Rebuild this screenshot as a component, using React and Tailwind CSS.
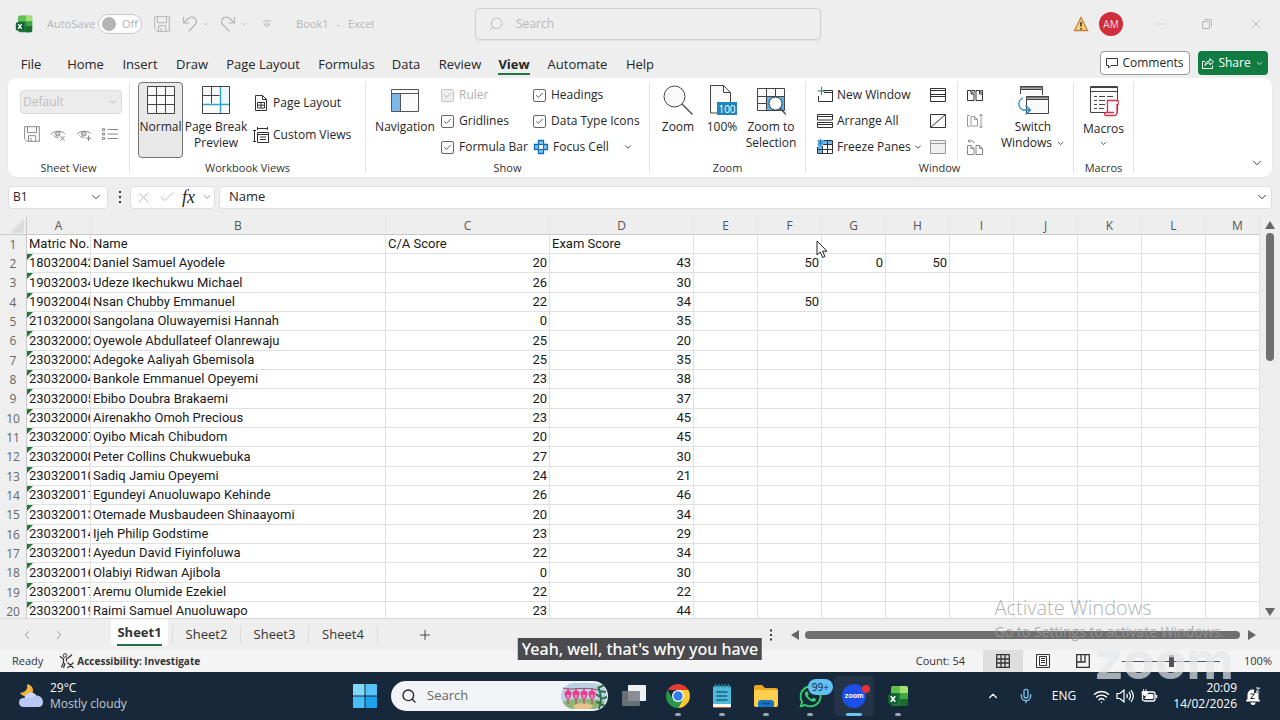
import { ChevronDown, ChevronLeft, ChevronRight, ChevronUp, Check, Mic, Minus, Plus, Search, Wifi, X } from 'lucide-react';
import { FaWhatsapp } from 'react-icons/fa';

const tabs = [
  { name: 'File', width: 'w-[54px]' },
  { name: 'Home', width: 'w-[55px]' },
  { name: 'Insert', width: 'w-[54px]' },
  { name: 'Draw', width: 'w-[50px]' },
  { name: 'Page Layout', width: 'w-[92px]' },
  { name: 'Formulas', width: 'w-[75px]' },
  { name: 'Data', width: 'w-[44px]' },
  { name: 'Review', width: 'w-[64px]' },
  { name: 'View', width: 'w-[44px]', active: true },
  { name: 'Automate', width: 'w-[83px]' },
  { name: 'Help', width: 'w-[42px]' },
];

const columns = [
  { name: 'A', width: 'w-16' },
  { name: 'B', width: 'w-[295px]' },
  { name: 'C', width: 'w-[164px]' },
  { name: 'D', width: 'w-36' },
  ...['E', 'F', 'G', 'H', 'I', 'J', 'K', 'L', 'M'].map((name) => ({ name, width: 'w-16' })),
];

const rows = [
  ['Matric No.', 'Name', 'C/A Score', 'Exam Score'],
  ['180320042', 'Daniel Samuel Ayodele', 20, 43, '', 50, 0, 50],
  ['190320034', 'Udeze Ikechukwu Michael', 26, 30],
  ['190320040', 'Nsan Chubby Emmanuel', 22, 34, '', 50],
  ['210320008', 'Sangolana Oluwayemisi Hannah', 0, 35],
  ['230320002', 'Oyewole Abdullateef Olanrewaju', 25, 20],
  ['230320003', 'Adegoke Aaliyah Gbemisola', 25, 35],
  ['230320004', 'Bankole Emmanuel Opeyemi', 23, 38],
  ['230320005', 'Ebibo Doubra Brakaemi', 20, 37],
  ['230320006', 'Airenakho Omoh Precious', 23, 45],
  ['230320007', 'Oyibo Micah Chibudom', 20, 45],
  ['230320008', 'Peter Collins Chukwuebuka', 27, 30],
  ['230320010', 'Sadiq Jamiu Opeyemi', 24, 21],
  ['230320011', 'Egundeyi Anuoluwapo Kehinde', 26, 46],
  ['230320013', 'Otemade Musbaudeen Shinaayomi', 20, 34],
  ['230320014', 'Ijeh Philip Godstime', 23, 29],
  ['230320015', 'Ayedun David Fiyinfoluwa', 22, 34],
  ['230320016', 'Olabiyi Ridwan Ajibola', 0, 30],
  ['230320017', 'Aremu Olumide Ezekiel', 22, 22],
  ['230320019', 'Raimi Samuel Anuoluwapo', 23, 44],
];

/* ---------- icons ---------- */

const Icon = ({ w = 16, h = 16, className = '', children }) => (
  <svg width={w} height={h} viewBox={`0 0 ${w} ${h}`} fill="none" stroke="currentColor" className={`shrink-0 ${className}`} aria-hidden="true">
    {children}
  </svg>
);

const ExcelLogo = ({ size }) => (
  <svg width={size} height={size} viewBox="0 0 22 22" className="shrink-0" aria-hidden="true">
    <rect x="4" y="1" width="17" height="20" rx="2" fill="#1a7a3c" />
    <path d="M4 3a2 2 0 0 1 2-2h7v7H4z" fill="#5fc04c" />
    <path d="M13 1h6a2 2 0 0 1 2 2v5h-8z" fill="#a5e070" />
    <path d="M13 8h8v6h-8z" fill="#3fa845" />
    <path d="M13 14h8v5a2 2 0 0 1-2 2h-6z" fill="#1d6b30" />
    <rect x="1" y="9" width="10" height="10" rx="2" fill="#0f6030" />
    <path d="M3.8 11.2l4.4 5.6M8.2 11.2l-4.4 5.6" stroke="#fff" strokeWidth="1.7" />
  </svg>
);

const SaveIcon = ({ className }) => (
  <Icon className={className}>
    <path d="M.7.7h14.6v14.6H3L.7 13zM3.5.7v6h9v-6M4.5 15.3v-5.6h7.2v5.6M7 12v3" />
  </Icon>
);

const UndoIcon = ({ className }) => (
  <Icon className={className}>
    <path d="M1.5 1v6h6M1.8 6.8L6 2.8c2.6-2.4 6-2 7.6.3 1.5 2.2.8 4.3-.8 5.9L6.5 15.5" strokeWidth="1.2" />
  </Icon>
);

const EyeIcon = ({ mark }) => (
  <Icon className="text-[#8a8a8a]">
    <path d="M1 8.5C3 4.5 12.5 4 14.8 8M3.5 9.5c1 1.3 2.5 2 4.5 2" />
    <circle cx="7.8" cy="7.8" r="2.3" fill="#ccc" />
    {mark === 'x' ? <path d="M10.5 10l4 4.5M14.5 10l-4 4.5" /> : <path d="M12.5 9.5v5.5M9.8 12.2h5.4" />}
  </Icon>
);

const ListIcon = () => (
  <Icon className="text-[#8a8a8a]">
    <path d="M.5 2.5h2v2h-2zM.5 7h2v2h-2zM.5 11.500h2v2h-2zM5.500 3.500H16M5.500 8H16M5.500 12.500H16" />
  </Icon>
);

const NormalIcon = () => (
  <Icon w={30} h={30} className="text-[#444]">
    <path d="M1.5 1.5h27v27h-27z" fill="#fafafa" />
    <path d="M10.5 1.5v27M19.5 1.5v27M1.5 10.5h27M1.5 19.5h27" />
  </Icon>
);

const PageBreakIcon = () => (
  <Icon w={30} h={30} className="text-[#444]">
    <path d="M1.5 1.5h27v27h-27z" fill="#fafafa" />
    <path d="M20 2h8v17h-8z" fill="#eaf7fc" stroke="none" />
    <path d="M10.5 1.5v17M1.5 10.5h17" />
    <path d="M19.5 2v26M2 19.5h26" stroke="#2fa8c8" strokeWidth="1.5" />
  </Icon>
);

const PageLayoutIcon = () => (
  <Icon className="text-[#333]">
    <path d="M2.5.5h7l4 4v11h-11zM9.5.5v4h4" />
    <path d="M4.5 7.5h7v5.5h-7zM8 7.5V13M4.5 10.2h7" />
  </Icon>
);

const CustomViewsIcon = () => (
  <Icon className="text-[#333]">
    <path d="M1.5 3v12M0 3.5h3M0 14.5h3M4 1.5h11M4.5 0v3M14.5 0v3" />
    <path d="M4.5 5.5h11v10h-11zM4.5 7.5h11M7 10h6M7 12.5h6" />
  </Icon>
);

const NavigationIcon = () => (
  <Icon w={30} h={30} className="text-[#555]">
    <path d="M1.5 4.5h27v22h-27z" fill="#fafafa" />
    <path d="M2 9h8v17H2z" fill="#7db9e8" stroke="none" />
    <path d="M1.5 8.5h27M10.5 8.5v18" />
  </Icon>
);

const FocusCellIcon = () => (
  <Icon className="text-[#0f6cbd]">
    <path d="M5.5 1.5h5v4h4v5h-4v4h-5v-4h-4v-5h4z" fill="#82c4ee" strokeWidth="1.3" />
    <path d="M5.5 5.5h5v5h-5z" fill="#fff" />
  </Icon>
);

const MagnifierIcon = () => (
  <Icon w={30} h={30} className="text-[#444]">
    <circle cx="11.5" cy="11.5" r="10.5" fill="#fafafa" />
    <path d="M19 19l10.5 10.5" strokeWidth="1.3" />
  </Icon>
);

const HundredIcon = () => (
  <svg width="30" height="30" viewBox="0 0 30 30" fill="none" stroke="#444" className="shrink-0" aria-hidden="true">
    <path d="M3.5.5h13l7 7V28h-20zM16.500.5v7h7" fill="#fafafa" />
    <rect x="10" y="17" width="20" height="13" fill="#1f87c0" stroke="none" />
    <text x="20" y="27.5" textAnchor="middle" fill="#fff" stroke="none" fontSize="10">100</text>
  </svg>
);

const ZoomSelectionIcon = () => (
  <Icon w={30} h={30} className="text-[#444]">
    <path d="M1.5 3.5h27v22h-27z" fill="#fafafa" />
    <path d="M11 12h17v13H11z" fill="#5eb0e5" stroke="none" />
    <path d="M10.5 3.5v22M19.5 3.5v8M1.5 11.5h27M1.5 18.5h9" />
    <circle cx="19.5" cy="18.5" r="6.5" fill="#fff" />
    <path d="M24 23l6 6.5" strokeWidth="1.3" />
  </Icon>
);

const NewWindowIcon = () => (
  <Icon className="text-[#333]">
    <path d="M6 3.5h9.5v11H1.5V9M7 5.5h8" />
    <path d="M4.5 0v8M.5 4h8" stroke="#1f8a54" />
  </Icon>
);

const ArrangeIcon = () => (
  <Icon className="text-[#333]">
    <path d="M.5 1.5h15v5.5H.5zM.5 9.500h15v5H.5zM.5 3.500h15M.5 11.500h15" />
  </Icon>
);

const FreezeIcon = () => (
  <Icon className="text-[#333]">
    <path d="M1 1h14v4H1zM1 5h4.5v10H1z" fill="#6bb8ea" stroke="none" />
    <path d="M7 1.5h8.5v13H.5V8M5.5 7v7.5M10.5 1.5v13M.5 10.500h15M6 5.500h9.500" />
    <path d="M3.5 0v7M.5 1.5l6 4M6.5 1.5l-6 4" stroke="#1b7fc4" />
  </Icon>
);

const SplitIcon = () => (
  <Icon className="text-[#333]"><path d="M.5 1.5h15v13H.5zM.5 3.5h15M.5 7.500h15M.5 9.500h15" /></Icon>
);

const HideIcon = () => (
  <Icon className="text-[#333]"><path d="M.5 1.5h15v13H.5zM1 14L15 2" /></Icon>
);

const UnhideIcon = () => (
  <Icon className="text-[#999]"><path d="M.5 1.5h15v13H.5z" fill="#f0f0f0" /><path d="M.5 4.500h15" /></Icon>
);

const SideBySideIcon = ({ className }) => (
  <Icon className={className}>
    <path d="M.5 3.5v10H7V7L4 3.500zM4 3.500V7h3M9 3.500v10h6.500V7l-3-3.500zM12.500 3.500V7h3M5 3.500h2.500v2M13.500 3.500h2v3" />
  </Icon>
);

const SyncIcon = () => (
  <Icon className="text-[#999]">
    <path d="M3 2.5H.5v11H3M4 3.5h3.5l3 3v6.5H4zM7.5 3.5v3h3M14 1v13.5M12.5 3L14 1l1.500 2M12.500 13l1.500 2 1.500-2" />
  </Icon>
);

const ResetIcon = () => (
  <Icon className="text-[#888]">
    <path d="M.5 6.5h3.5l3 3v6H.5zM4 6.5v3h3M9 6.5h3.5l3 3v6H9zM12.5 6.5v3h3M7 4c0-1.5-1-2-3-2H1M3 .5L1 2l2 1.5" />
  </Icon>
);

const SwitchIcon = () => (
  <Icon w={32} h={30} className="text-[#444]">
    <path d="M3.5 9V1.5h22V10" fill="#fafafa" />
    <path d="M3.5 2h22v2.5h-22z" fill="#aaa" />
    <path d="M9.5 11.5h22v17h-22z" fill="#fafafa" />
    <path d="M9.5 12h22v2.5h-22z" fill="#aaa" />
    <path d="M6 13c-5 2-6 9 0 12h7M8.5 20.5l5 4.5-5 4.5" stroke="#2b88c0" strokeWidth="1.3" />
  </Icon>
);

const MacrosIcon = () => (
  <Icon w={30} h={32} className="text-[#444]">
    <path d="M1.5 1.5h27v26h-27z" fill="#fafafa" />
    <path d="M1.5 2.5h27M1.5 6.5h27M5 11.5h3M10 11.5h6M18 11.5h6M5 15.5h3M10 15.5h6M5 19.5h3M10 19.5h6M5 23.5h3M10 23.5h5" />
    <path d="M18.5 27V15.5h9c3 0 3 4 1 4H28V27c0 3-2 3.5-3 3.5h-8c-2 0-2-3 0-3h8" fill="#fff" stroke="#d5304a" strokeWidth="1.3" />
  </Icon>
);

const AccessibilityIcon = () => (
  <Icon className="text-[#333]">
    <circle cx="6" cy="2.5" r="1.8" />
    <path d="M1 3c.5 1.5 2 2.2 3.5 2.5v4l-2 5M11 3c-.5 1.5-2 2.2-3.5 2.5v3M6 10l-1.5 5M8.5 9.5l6 5.5M14.5 9.5l-6 5.5M13 1.5l-2 2" strokeWidth="1.2" />
  </Icon>
);

const WeatherIcon = () => (
  <svg width="26" height="26" viewBox="0 0 26 26" className="shrink-0" aria-hidden="true">
    <path d="M9 1c1 5-1 8-7 9 3 5 12 5 13-2C15 4 13 2 9 1z" fill="#f0b43a" />
    <circle cx="13" cy="16" r="6.5" fill="#c9d6f8" />
    <circle cx="19" cy="18" r="5.5" fill="#b3c4f2" />
    <rect x="1" y="15" width="24" height="9" rx="4.5" fill="#b9c8f4" />
  </svg>
);

const WindowsIcon = () => (
  <svg width="24" height="24" viewBox="0 0 24 24" aria-hidden="true">
    <path d="M0 1a1 1 0 0 1 1-1h10.5v11.5H0z" fill="#7fd8fb" />
    <path d="M12.5 0H23a1 1 0 0 1 1 1v10.5H12.5z" fill="#55c3f8" />
    <path d="M0 12.5h11.5V24H1a1 1 0 0 1-1-1z" fill="#48bdf7" />
    <path d="M12.5 12.5H24V23a1 1 0 0 1-1 1H12.5z" fill="#1ba3ef" />
  </svg>
);

// Fuchsia blossoms in the taskbar search box
const FlowersIcon = () => (
  <svg width="48" height="28" viewBox="0 0 48 28" aria-hidden="true">
    <rect x="1" y="1" width="46" height="26" rx="13" fill="#b9d3e4" />
    <path d="M3 20c8-4 25-5 42 0-3 5-8 7-13 7H14c-5 0-9-3-11-7z" fill="#8fb878" />
    <path d="M13 24c6-4 14-4 20 0l-3 3H15z" fill="#e8c48c" />
    <path d="M3 6c8 3 20-2 35 2" stroke="#9a4a6a" fill="none" />
    {[8, 16, 24, 32].map((x) => (
      <g key={x}>
        <path d={`M${x} 6v16`} stroke="#c02868" />
        <path d={`M${x - 3.5} 10l3.5-2 3.5 2c0 4-1 6-3.5 8-2.500-2-3.500-4-3.500-8z`} fill="#e83e8c" />
        <path d={`M${x - 1.5} 13h3l-1.500 4z`} fill="#f7a4cb" />
      </g>
    ))}
    <path d="M39 27c3-8 3-14-1-22M38 6l6-3M39 9l7 1M40 15l-4-3M41 17l6-2M40 21l-4-1M40 22l5 2" stroke="#2f7048" strokeWidth="2" fill="none" />
  </svg>
);

const TaskViewIcon = () => (
  <svg width="24" height="24" viewBox="0 0 24 24" aria-hidden="true">
    <rect x="6" y="1" width="18" height="16" rx="1" fill="#eef0f3" />
    <rect x="0" y="7" width="18" height="15" rx="1" fill="#777d84" opacity="0.85" />
  </svg>
);

const ChromeIcon = () => (
  <svg width="24" height="24" viewBox="0 0 24 24" aria-hidden="true">
    <path d="M1.61 6A12 12 0 0 1 22.39 6H12z" fill="#e33b2e" />
    <path d="M22.39 6A12 12 0 0 1 12 24L17.2 15 12 6z" fill="#fcc934" />
    <path d="M1.61 6A12 12 0 0 0 12 24l5.2-9H6.8z" fill="#279847" />
    <circle cx="12" cy="12" r="6" fill="#fff" />
    <circle cx="12" cy="12" r="4.7" fill="#2f7de9" />
  </svg>
);

const NotepadIcon = () => (
  <svg width="20" height="24" viewBox="0 0 20 24" aria-hidden="true">
    <rect x="1" y="2" width="18" height="21" rx="1.5" fill="#4fb9dc" />
    <path d="M1 20h18v2a1.5 1.5 0 0 1-1.5 1.5h-15A1.5 1.5 0 0 1 1 22z" fill="#fff" />
    <path d="M2 23.5h16" stroke="#c8652c" />
    <path d="M3.5 0v3.5M6.8 0v3.5M10 0v3.5M13.2 0v3.5M16.5 0v3.5" stroke="#2e7fa0" strokeWidth="1.5" />
    <path d="M4.5 8h11M4.5 12h11M4.5 16h11" stroke="#165f80" strokeWidth="1.3" />
  </svg>
);

const FolderIcon = () => (
  <svg width="26" height="24" viewBox="0 0 26 24" aria-hidden="true">
    <path d="M1 3a2 2 0 0 1 2-2h6l3 3h11a2 2 0 0 1 2 2v4H1z" fill="#e8a825" />
    <rect x="1" y="6" width="24" height="17" rx="2" fill="#fcd04e" />
    <path d="M5 23v-4a3 3 0 0 1 3-3h10a3 3 0 0 1 3 3v4z" fill="#1a74c0" />
    <path d="M9 19.5h8" stroke="#0d4f8c" strokeWidth="1.5" />
  </svg>
);

const SoundIcon = () => (
  <Icon w={18} h={16}>
    <path d="M1 5.5h3L8 2v12l-4-3.5H1zM10.5 6c1 1.2 1 2.8 0 4M12.8 4c2 2.4 2 5.6 0 8M15 2.2c2.8 3.500 2.800 8.100 0 11.600" strokeWidth="1.2" />
  </Icon>
);

const BatteryIcon = () => (
  <Icon w={18} h={16}>
    <rect x="2.5" y="4" width="12.5" height="9" rx="2" strokeWidth="1.3" />
    <path d="M7.5 6.5h5.500v4H5z" fill="currentColor" />
    <path d="M16.5 7v3" strokeWidth="1.5" />
    <path d="M3.5 1v2M6 1v2M2 3.500h5.500v2L5 8 2 5.500z" fill="currentColor" strokeWidth="0.8" />
  </Icon>
);

const BellIcon = () => (
  <svg width="16" height="18" viewBox="0 0 16 18" aria-hidden="true">
    <path d="M2.500 12V7.500a5 5 0 0 1 5-5H9V6h4.500v6l1.500 1.500v1H1v-1z" fill="#fff" />
    <path d="M5.5 15.5h5a2.5 2.5 0 0 1-5 0z" fill="#fff" />
    <path d="M5.500 7h4L5.500 11.500h4" stroke="#162637" fill="none" />
    <path d="M11 1h3.5L11 5h3.500" stroke="#fff" fill="none" />
  </svg>
);

/* ---------- ribbon pieces ---------- */

const RibbonGroup = ({ title, width, children }) => (
  <section className={`flex shrink-0 flex-col pt-1 ${width}`}>
    <div className="flex h-20">{children}</div>
    <h2 className="text-center text-[11px] leading-3 text-[#333]">{title}</h2>
  </section>
);

const Divider = () => <div className="my-1 w-px shrink-0 bg-[#e3e3e3]" />;

const BigButton = ({ icon, width, active, children }) => (
  <button
    type="button"
    className={`flex h-[76px] shrink-0 flex-col items-center rounded border pt-[2px] text-center text-[12px] leading-4 ${width} ${
      active ? 'border-[#707070] bg-[#e9e9e9]' : 'border-transparent'
    }`}
  >
    {icon}
    <span className="mt-1 whitespace-nowrap">{children}</span>
  </button>
);

const SmallButton = ({ icon, children, menu }) => (
  <button type="button" className="flex h-[26px] items-center gap-1 whitespace-nowrap text-[12px] leading-4">
    {icon}
    {children}
    {menu && <ChevronDown size={10} className="-ml-0.5" />}
  </button>
);

const CheckOption = ({ label, disabled }) => (
  <label className={`flex h-[26px] items-center gap-[5px] whitespace-nowrap text-[12px] leading-4 ${disabled ? 'text-[#b0b0b0]' : ''}`}>
    <span className="grid place-items-center *:col-start-1 *:row-start-1">
      <input
        type="checkbox"
        defaultChecked
        disabled={disabled}
        className="size-[13px] appearance-none rounded-xs border border-[#666] disabled:border-[#c4c4c4] disabled:bg-[#ededed]"
      />
      <Check size={9} className="pointer-events-none" />
    </span>
    {label}
  </label>
);

function TitleBar() {
  return (
    <header className="flex h-12 shrink-0 items-center text-[#b5b5b5]">
      <div className="flex flex-1 items-center pl-[15px]">
        <ExcelLogo size={18} />
        <label className="ml-[14px] flex items-center gap-[3px] text-[11px]">
          AutoSave
          <span className="flex h-5 w-11 items-center gap-1.5 rounded-full border border-[#c8c8c8] bg-white pl-[3px]">
            <input type="checkbox" className="size-[14px] appearance-none rounded-full bg-[#b3b3b3]" />
            Off
          </span>
        </label>
        <button type="button" aria-label="Save" className="ml-3"><SaveIcon /></button>
        <button type="button" aria-label="Undo" className="ml-3 flex items-center gap-1"><UndoIcon /><ChevronDown size={8} /></button>
        <button type="button" aria-label="Redo" className="ml-[10px] flex items-center gap-1"><UndoIcon className="-scale-x-100" /><ChevronDown size={8} /></button>
        <button type="button" aria-label="Customize toolbar" className="ml-[14px]">
          <Icon w={10} h={10}><path d="M1 2h8M2 5l3 3 3-3z" /></Icon>
        </button>
        <p className="ml-6 flex gap-2 text-[11px]"><span>Book1</span><span>-</span><span>Excel</span></p>
      </div>
      <label className="ml-[18px] flex h-8 w-[346px] items-center gap-3 rounded border border-[#cfcfcf] px-3 shadow-xs">
        <Search size={16} strokeWidth={1.3} className="-scale-x-100" />
        <input type="text" placeholder="Search" aria-label="Search" className="w-60 text-[12px] outline-none placeholder:text-[#b8b8b8]" />
      </label>
      <div className="flex flex-1 items-center justify-end pr-[17px]">
        <Icon w={16} h={16} className="mr-[10px]">
          <path d="M8 1.5l6.5 13h-13z" fill="#fbd27a" stroke="#c8803a" strokeWidth="1.3" />
          <path d="M8 6v4.5M8 12v1.5" stroke="#333" strokeWidth="1.5" />
        </Icon>
        <button type="button" className="mr-[30px] size-6 rounded-full bg-[#ce2f3b] text-[10px] text-[#f7dcde]">AM</button>
        <button type="button" aria-label="Minimize" className="mr-9"><Minus size={12} strokeWidth={1} /></button>
        <button type="button" aria-label="Restore" className="mr-9">
          <Icon w={12} h={12}><path d="M1.5 3.5h7v7h-7zM3.5 1.5h6a1 1 0 0 1 1 1v6" /></Icon>
        </button>
        <button type="button" aria-label="Close"><X size={14} strokeWidth={1.5} /></button>
      </div>
    </header>
  );
}

function RibbonTabs() {
  return (
    <nav className="flex h-[30px] shrink-0 items-center pl-1 pr-3">
      {tabs.map((tab) => (
        <button
          key={tab.name}
          type="button"
          className={`flex h-7 items-center justify-center whitespace-nowrap pt-1 text-[13px] leading-[18px] ${tab.width} ${tab.active ? 'font-bold' : ''}`}
        >
          <span className={tab.active ? 'border-b-2 border-[#217346]' : 'border-b-2 border-transparent'}>{tab.name}</span>
        </button>
      ))}
      <div className="ml-auto flex gap-2 text-[12px]">
        <button type="button" className="flex h-6 w-[90px] items-center justify-center gap-1 rounded border border-[#9a9a9a] bg-white">
          <Icon w={12} h={12} className="text-[#333]"><path d="M.5 1.5h11v7H5l-2.5 2.5V8.5h-2z" /></Icon>
          Comments
        </button>
        <button type="button" className="flex h-6 w-[70px] items-center justify-center gap-1 rounded bg-[#107c41] text-white">
          <Icon w={12} h={12}><path d="M3 4.5H.5v7h10V8.5M3 8.5c.2-3 2-4.5 5-4.5V1.500L11.500 5 8 8V6C6 6 4 6.500 3 8.500z" /></Icon>
          Share
          <ChevronDown size={9} />
        </button>
      </div>
    </nav>
  );
}

function Ribbon() {
  return (
    <div className="mx-2 flex h-[99px] shrink-0 rounded-lg bg-white shadow-xs">
      <RibbonGroup title="Sheet View" width="w-[121px]">
        <div className="flex flex-col gap-3 pl-3 pt-2">
          <div className="grid items-center *:col-start-1 *:row-start-1">
            <select aria-label="Sheet view" disabled className="h-6 w-[102px] appearance-none rounded border border-[#dcdcdc] bg-[#ececec] pl-0.5 text-[12px] text-[#bdbdbd]">
              <option>Default</option>
            </select>
            <ChevronDown size={10} className="mr-1 justify-self-end text-[#aaa]" />
          </div>
          <div className="flex gap-[10px] pl-1">
            <button type="button" aria-label="Keep"><SaveIcon className="text-[#888]" /></button>
            <button type="button" aria-label="Exit"><EyeIcon mark="x" /></button>
            <button type="button" aria-label="New"><EyeIcon mark="plus" /></button>
            <button type="button" aria-label="Options"><ListIcon /></button>
          </div>
        </div>
      </RibbonGroup>
      <Divider />
      <RibbonGroup title="Workbook Views" width="w-[235px]">
        <div className="flex pl-2">
          <BigButton icon={<NormalIcon />} width="w-[45px]" active>Normal</BigButton>
          <BigButton icon={<PageBreakIcon />} width="w-[66px]">Page Break<br />Preview</BigButton>
          <div className="flex flex-col gap-[6px] pl-1 pt-2">
            <SmallButton icon={<PageLayoutIcon />}>Page Layout</SmallButton>
            <SmallButton icon={<CustomViewsIcon />}>Custom Views</SmallButton>
          </div>
        </div>
      </RibbonGroup>
      <Divider />
      <RibbonGroup title="Show" width="w-[283px]">
        <div className="flex pl-[6px]">
          <BigButton icon={<NavigationIcon />} width="w-[66px]">Navigation</BigButton>
          <div className="w-[95px] pl-[3px]">
            <CheckOption label="Ruler" disabled />
            <CheckOption label="Gridlines" />
            <CheckOption label="Formula Bar" />
          </div>
          <div>
            <CheckOption label="Headings" />
            <CheckOption label="Data Type Icons" />
            <div className="flex items-center gap-[14px]">
              <SmallButton icon={<FocusCellIcon />}>Focus Cell</SmallButton>
              <button type="button" aria-label="Focus cell options"><ChevronDown size={10} /></button>
            </div>
          </div>
        </div>
      </RibbonGroup>
      <Divider />
      <RibbonGroup title="Zoom" width="w-[155px]">
        <div className="flex pl-[3px]">
          <BigButton icon={<MagnifierIcon />} width="w-[50px]">Zoom</BigButton>
          <BigButton icon={<HundredIcon />} width="w-[38px]">100%</BigButton>
          <BigButton icon={<ZoomSelectionIcon />} width="w-[60px]">Zoom to<br />Selection</BigButton>
        </div>
      </RibbonGroup>
      <Divider />
      <RibbonGroup title="Window" width="w-[267px]">
        <div className="flex pl-[11px]">
          <div className="w-[113px]">
            <SmallButton icon={<NewWindowIcon />}>New Window</SmallButton>
            <SmallButton icon={<ArrangeIcon />}>Arrange All</SmallButton>
            <SmallButton icon={<FreezeIcon />} menu>Freeze Panes</SmallButton>
          </div>
          <div className="w-[27px]">
            <SmallButton icon={<SplitIcon />} />
            <SmallButton icon={<HideIcon />} />
            <SmallButton icon={<UnhideIcon />} />
          </div>
          <div className="border-l border-[#e3e3e3] pl-[9px]">
            <SmallButton icon={<SideBySideIcon className="text-[#333]" />} />
            <SmallButton icon={<SyncIcon />} />
            <SmallButton icon={<ResetIcon />} />
          </div>
          <div className="ml-4">
            <BigButton icon={<SwitchIcon />} width="w-[68px]">
              Switch<br />
              <span className="flex items-center gap-1">Windows <ChevronDown size={9} /></span>
            </BigButton>
          </div>
        </div>
      </RibbonGroup>
      <Divider />
      <RibbonGroup title="Macros" width="w-[59px]">
        <div className="flex pl-1">
          <BigButton icon={<MacrosIcon />} width="w-[51px]">
            <span className="flex flex-col items-center gap-0.5">Macros <ChevronDown size={9} /></span>
          </BigButton>
        </div>
      </RibbonGroup>
      <Divider />
      <button type="button" aria-label="Collapse ribbon" className="mb-[7px] ml-auto mr-2 self-end"><ChevronDown size={14} strokeWidth={1.5} /></button>
    </div>
  );
}

function FormulaBar() {
  return (
    <div className="mx-2 flex h-10 shrink-0 items-center text-[13px]">
      <div className="flex h-[23px] w-[100px] items-center rounded border border-[#dedede] bg-white px-1">
        <input type="text" defaultValue="B1" aria-label="Name box" className="w-full min-w-0 text-[12px] outline-none" />
        <ChevronDown size={14} strokeWidth={1.5} className="shrink-0" />
      </div>
      <Icon w={4} h={14} className="ml-[10px] text-[#333]">
        <path d="M1 2h2M1 7h2M1 12h2" strokeWidth="2" />
      </Icon>
      <div className="ml-2 flex h-[23px] w-[85px] items-center justify-between rounded border border-[#dedede] bg-white pl-1 pr-px">
        <button type="button" aria-label="Cancel" className="text-[#b8b8b8]"><X size={17} strokeWidth={1.3} /></button>
        <button type="button" aria-label="Enter" className="text-[#b8b8b8]"><Check size={18} strokeWidth={1.3} /></button>
        <button type="button" className="font-['Liberation_Serif',serif] text-[18px] italic leading-5">fx</button>
        <ChevronDown size={12} className="text-[#999]" />
      </div>
      <div className="ml-1 flex h-[23px] flex-1 items-center rounded border border-[#dedede] bg-white pl-[9px] pr-0.5">
        <input type="text" defaultValue="Name" aria-label="Formula" className="flex-1 outline-none" />
        <ChevronDown size={14} strokeWidth={1.5} />
      </div>
    </div>
  );
}

function Grid() {
  return (
    <main className="flex min-h-0 flex-1 border-b border-[#d8d8d8]">
      <div className="min-w-0 flex-1 overflow-hidden border-r border-[#e1e1e1]">
        <table className="w-[1269px] table-fixed border-separate border-spacing-0 font-[Roboto,sans-serif] text-[13px] leading-[18px] text-[#1a1a1a]">
          <thead>
            <tr className="h-[18px] text-[12px] leading-[17px] text-[#555]">
              <th className="w-[27px] border-b border-r border-[#c8c8c8] p-0" aria-label="Select all">
                <Icon w={14} h={14} className="ml-2.5"><path d="M14 0v14H0z" fill="#dcdcdc" stroke="none" /></Icon>
              </th>
              {columns.map((col) => (
                <th key={col.name} scope="col" className={`border-b border-r border-b-[#c8c8c8] border-r-[#e6e6e6] p-0 font-['Open_Sans',sans-serif] font-normal ${col.width}`}>
                  {col.name}
                </th>
              ))}
            </tr>
          </thead>
          <tbody>
            {rows.map((row, r) => (
              <tr key={row[1]} className="h-[19px] nth-[3n]:h-5">
                <th scope="row" className="border-r border-[#c8c8c8] bg-[#efefef] p-0 text-center font-['Open_Sans',sans-serif] text-[12px] font-normal text-[#666]">{r + 1}</th>
                {columns.map((col, c) => (
                  <td
                    key={col.name}
                    className={`relative overflow-hidden whitespace-nowrap border-b border-r border-[#e1e1e1] bg-white px-0.5 py-0 text-clip ${
                      c > 1 && r > 0 ? 'text-right' : ''
                    }`}
                  >
                    {c === 0 && r > 0 && <span className="absolute left-0 top-0 size-[6px] bg-[#1e7b34] [clip-path:polygon(0_0,100%_0,0_100%)]" />}
                    {row[c]}
                  </td>
                ))}
              </tr>
            ))}
          </tbody>
        </table>
      </div>
      <div className="flex w-5 shrink-0 flex-col items-center pb-0.5 pt-1 text-[#666]">
        <Icon w={10} h={8}><path d="M5 0l5 8H0z" fill="currentColor" stroke="none" /></Icon>
        <div className="mt-1 h-32 w-2 rounded-full bg-[#707070]" />
        <Icon w={10} h={8} className="mt-auto"><path d="M0 0h10L5 8z" fill="currentColor" stroke="none" /></Icon>
      </div>
    </main>
  );
}

function SheetTabs() {
  return (
    <div className="flex h-[31px] shrink-0 items-center text-[#333]">
      <button type="button" aria-label="Previous sheet" className="ml-5 text-[#888]"><ChevronLeft size={14} strokeWidth={1.5} /></button>
      <button type="button" aria-label="Next sheet" className="ml-[18px] text-[#888]"><ChevronRight size={14} strokeWidth={1.5} /></button>
      <div className="ml-[45px] flex h-full text-[13px]">
        <button type="button" className="mb-1 flex w-[57px] justify-center rounded-b bg-white font-bold">
          <span className="mt-1 border-b-2 border-[#217346] leading-[19px]">Sheet1</span>
        </button>
        <button type="button" className="my-1.5 ml-1 w-[69px] border-x border-[#dcdcdc]">Sheet2</button>
        <button type="button" className="my-1.5 w-[68px] border-r border-[#dcdcdc]">Sheet3</button>
        <button type="button" className="my-1.5 w-[69px] border-r border-[#dcdcdc]">Sheet4</button>
      </div>
      <button type="button" aria-label="New sheet" className="ml-[39px]"><Plus size={16} strokeWidth={1.3} /></button>
      <div className="ml-auto flex w-[511px] items-center text-[#666]">
        <Icon w={4} h={12} className="text-[#333]"><path d="M1 1.5h2M1 6h2M1 10.5h2" strokeWidth="2" /></Icon>
        <Icon w={8} h={10} className="ml-[18px]"><path d="M8 0v10L0 5z" fill="currentColor" stroke="none" /></Icon>
        <div className="ml-1.5 h-2 w-[435px] rounded-full bg-[#707070]" />
        <Icon w={8} h={10} className="ml-2"><path d="M0 0v10l8-5z" fill="currentColor" stroke="none" /></Icon>
      </div>
    </div>
  );
}

function StatusBar() {
  return (
    <footer className="flex h-[22px] shrink-0 items-center bg-[#f4f4f4] pl-3 pr-2 text-[11px] text-[#333]">
      <span>Ready</span>
      <button type="button" className="ml-4 flex items-center gap-0.5 text-[10px] font-bold"><AccessibilityIcon />Accessibility: Investigate</button>
      <span className="ml-auto">Count: 54</span>
      <div className="ml-[18px] flex h-full *:flex *:w-10 *:items-center *:justify-center">
        <button type="button" aria-label="Normal view" className="bg-[#dedede]">
          <Icon w={14} h={14}><path d="M.7.7h12.6v12.6H.7zM5 .7v12.6M9 .7v12.6M.7 5h12.6M.7 9h12.6" strokeWidth="1.3" /></Icon>
        </button>
        <button type="button" aria-label="Page layout view">
          <Icon w={14} h={14}><path d="M.5.5h13v13H.5zM3.5 2.500h7v9h-7zM5 4.500h4M5 6.500h4M5 8.500h4" /></Icon>
        </button>
        <button type="button" aria-label="Page break view">
          <Icon w={14} h={14}><path d="M.7.7h12.6v12.6H.7zM5 .7V8H.7M9 .7V8H5" strokeWidth="1.3" /></Icon>
        </button>
      </div>
      <input
        type="range"
        defaultValue="50"
        aria-label="Zoom level"
        className="ml-[19px] h-4 w-[98px] appearance-none bg-[linear-gradient(#555,#555)] bg-[length:100%_1px] bg-center bg-no-repeat [&::-webkit-slider-thumb]:h-3 [&::-webkit-slider-thumb]:w-[5px] [&::-webkit-slider-thumb]:appearance-none [&::-webkit-slider-thumb]:bg-[#555]"
      />
      <span className="ml-6">100%</span>
    </footer>
  );
}

const TaskButton = ({ label, running, active, children }) => (
  <button
    type="button"
    aria-label={label}
    className={`relative mx-0.5 flex h-10 w-10 items-center justify-center rounded ${active ? 'bg-[#233348]' : ''}`}
  >
    {children}
    {running && <span className={`absolute bottom-0 h-[3px] rounded-full ${active ? 'w-4 bg-[#6cc3f2]' : 'w-[6px] bg-[#9aa4ae]'}`} />}
  </button>
);

function Taskbar() {
  return (
    <div className="grid h-12 shrink-0 grid-cols-[1fr_auto_1fr] items-center bg-[#162839] text-[12px] text-white">
      <button type="button" className="flex items-center gap-[6px] pl-[18px] text-left leading-4">
        <WeatherIcon />
        <span>29°C<br /><span className="text-[#c3cad2]">Mostly cloudy</span></span>
      </button>
      <div className="flex items-center pr-[17px]">
        <TaskButton label="Start"><WindowsIcon /></TaskButton>
        <label className="mx-1 flex h-[30px] w-[217px] items-center gap-[10px] rounded-full bg-[#f1f3f6] pl-[10px] text-[#222]">
          <Search size={16} className="shrink-0" />
          <input type="text" placeholder="Search" aria-label="Search Windows" className="min-w-0 flex-1 text-[13px] outline-none placeholder:text-[#666]" />
          <FlowersIcon />
        </label>
        <TaskButton label="Task view"><TaskViewIcon /></TaskButton>
        <TaskButton label="Chrome" running><ChromeIcon /></TaskButton>
        <TaskButton label="Notepad" running><NotepadIcon /></TaskButton>
        <TaskButton label="File Explorer" running><FolderIcon /></TaskButton>
        <TaskButton label="WhatsApp" running>
          <FaWhatsapp size={25} color="#2fd566" />
          <span className="absolute -right-[3px] top-[3px] rounded-full bg-[#62c0f5] px-1 text-[10px] leading-4 text-[#10202e]">99+</span>
        </TaskButton>
        <TaskButton label="Zoom" running active>
          <span className="flex size-6 items-center justify-center rounded-full bg-[#1a4fe8] font-[Inter,sans-serif] text-[7px] font-bold">zoom</span>
          <span className="absolute right-1 top-[9px] size-2 rounded-full bg-[#e8303a]" />
        </TaskButton>
        <TaskButton label="Excel" running><ExcelLogo size={22} /></TaskButton>
      </div>
      <div className="flex items-center justify-end pr-[19px]">
        <button type="button" aria-label="Hidden icons" className="mr-[18px]"><ChevronUp size={14} /></button>
        <button type="button" aria-label="Microphone" className="mr-[18px] text-[#7cc4ee]"><Mic size={16} /></button>
        <span className="mr-[17px]">ENG</span>
        <button type="button" aria-label="Network and sound" className="mr-[15px] flex items-center gap-[6px]">
          <Wifi size={17} />
          <SoundIcon />
          <BatteryIcon />
        </button>
        <button type="button" className="mr-2 text-right leading-4">20:09<br />14/02/2026</button>
        <button type="button" aria-label="Notifications"><BellIcon /></button>
      </div>
    </div>
  );
}

function App() {
  return (
    <div className="relative flex h-screen w-full flex-col overflow-hidden bg-[#eeeeee] font-['Open_Sans',sans-serif] text-[#262626]">
      <TitleBar />
      <RibbonTabs />
      <Ribbon />
      <FormulaBar />
      <Grid />
      <SheetTabs />
      <StatusBar />
      <Taskbar />

      {/* live caption */}
      <p className="absolute bottom-[60px] left-1/2 -translate-x-1/2 whitespace-nowrap bg-[#4a4a4f] px-1 font-['Noto_Sans',sans-serif] text-[16px] font-medium leading-[22px] text-white">
        Yeah, well, that's why you have
      </p>

      {/* activation notice */}
      <div className="pointer-events-none absolute bottom-[78px] right-14 text-[#9b9b9b]/80">
        <p className="text-[20px] leading-7 font-light">Activate Windows</p>
        <p className="text-[14px] leading-5">Go to Settings to activate Windows.</p>
      </div>

      {/* recording watermark */}
      <p className="pointer-events-none absolute bottom-[33px] right-[46px] font-[Inter,sans-serif] text-[52px] font-bold leading-[52px] text-[#e4e6e8]/70">zoom</p>

      {/* mouse pointer */}
      <svg width="13" height="19" viewBox="0 0 13 19" className="pointer-events-none absolute left-[816px] top-[240px]" aria-hidden="true">
        <path d="M1 1v14l3.3-3 2.4 5.5 2.2-1-2.3-5.3H11z" fill="#fff" stroke="#222" />
      </svg>
    </div>
  );
}

export default App;
